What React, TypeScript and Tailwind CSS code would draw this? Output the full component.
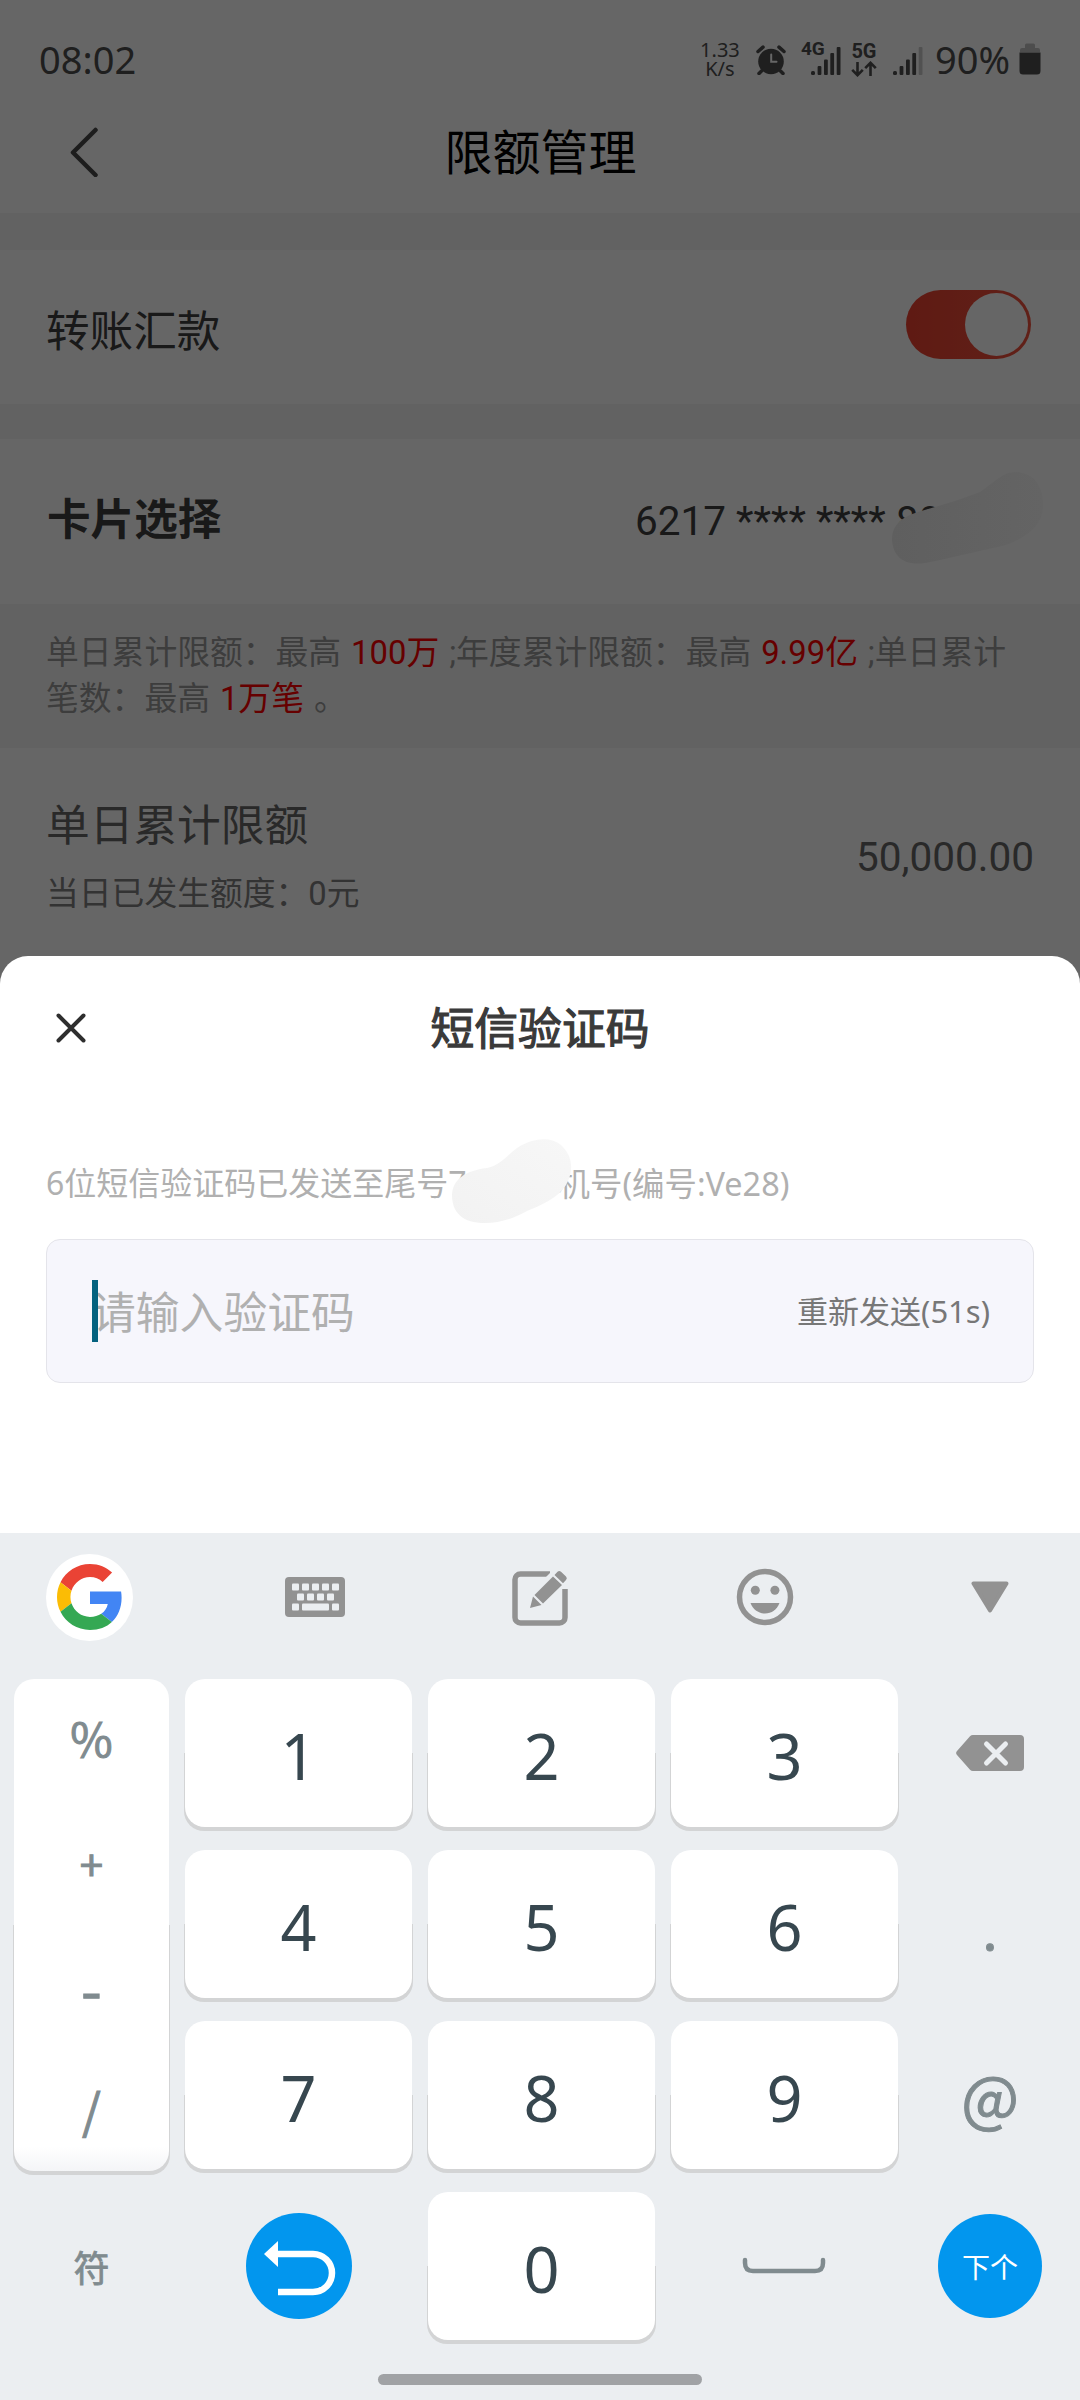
import type { ReactNode } from 'react';
import clsx from 'clsx';

interface KeyProps {
  children: ReactNode;
  className?: string;
}

const digitRows = [
  ['1', '2', '3'],
  ['4', '5', '6'],
  ['7', '8', '9'],
];

const SignalBars = ({ weakLast = false }: { weakLast?: boolean }) => (
  <svg className="h-[29px] w-[30px]" viewBox="0 0 30 29" fill="currentColor">
    <rect x="0" y="24" width="4" height="4" rx="1.5" />
    <rect x="6.6" y="19" width="3.8" height="9" rx="1" />
    <rect x="13" y="12.5" width="3.8" height="15.5" rx="1" />
    <rect x="19.3" y="6" width="3.8" height="22" rx="1" />
    <rect x="25.7" y="0" width="3.8" height="28" rx="1" opacity={weakLast ? 0.3 : 1} />
  </svg>
);

const AlarmIcon = () => (
  <svg className="h-[30px] w-[30px]" viewBox="0 0 30 30" fill="none" stroke="currentColor" strokeLinecap="round">
    <circle cx="15" cy="16.5" r="12.8" fill="currentColor" stroke="none" />
    <path d="M2 6.5 7 2.2M28 6.5 23 2.2M5.5 26 3 28.5M24.5 26l2.5 2.500" strokeWidth="3.5" />
    <path d="M15.2 9.5v7.3h5.3" stroke="#fff" strokeWidth="2" />
  </svg>
);

const DataArrows = () => (
  <svg className="h-[16px] w-[26px]" viewBox="0 0 26 16" fill="none" stroke="currentColor" strokeWidth="2.6">
    <path d="M6.5 1v13M1.2 8.8l5.3 5.4 5.3-5.4M19.5 15V2M14.2 7.2l5.3-5.4 5.3 5.4" />
  </svg>
);

const StatusBar = () => (
  <div className="flex h-[118px] items-center justify-between pl-[39px] pr-[39px] font-['Noto_Sans',sans-serif] text-[38px] leading-none text-[#4e4e4e]">
    <span>08:02</span>
    <div className="flex items-center">
      <div className="flex w-[40px] flex-col items-center text-[20px] leading-[19px]">
        <span>1.33</span>
        <span>K/s</span>
      </div>
      <span className="ml-[16px] pt-[2px]"><AlarmIcon /></span>
      <div className="relative ml-[15px] flex w-[40px] justify-end pt-[5px]">
        <span className="absolute -top-[3px] left-0 font-['Roboto',sans-serif] text-[19px] font-bold leading-[20px]">4G</span>
        <SignalBars />
      </div>
      <div className="ml-[10px] flex flex-col items-center font-['Roboto',sans-serif] text-[20px] font-bold leading-[20px]">
        5G
        <DataArrows />
      </div>
      <span className="ml-[16px] pt-[5px]"><SignalBars weakLast /></span>
      <span className="ml-[12px]">90%</span>
      <svg className="ml-[9px] h-[32px] w-[22px]" viewBox="0 0 22 32" fill="currentColor">
        <path d="M1 9V7a2 2 0 0 1 2-2h3V2a1.500 1.500 0 0 1 1.500-1.500h7A1.500 1.500 0 0 1 16 2v3h3a2 2 0 0 1 2 2v2z" opacity=".35" />
        <path d="M.5 9.500h21V28a3.500 3.500 0 0 1-3.500 3.500H4A3.500 3.500 0 0 1 .5 28z" />
      </svg>
    </div>
  </div>
);

const Key = ({ children, className }: KeyProps) => (
  <button
    className={clsx(
      "relative flex items-center justify-center rounded-[20px] bg-white pt-[5px] font-['Noto_Sans',sans-serif] text-[63px] leading-none text-[#37474f]",
      "before:absolute before:-inset-x-px before:-bottom-[4px] before:top-1/2 before:-z-10 before:rounded-b-[20px] before:bg-[#d3d4d5]",
      className
    )}
  >
    {children}
  </button>
);

const GoogleLogo = () => (
  <svg className="h-[66px] w-[66px]" viewBox="0 0 48 48">
    <path fill="#EA4335" d="M24 9.500c3.540 0 6.710 1.220 9.210 3.600l6.850-6.850C35.900 2.380 30.470 0 24 0 14.620 0 6.510 5.380 2.560 13.220l7.980 6.190C12.430 13.720 17.740 9.500 24 9.500z" />
    <path fill="#4285F4" d="M46.980 24.550c0-1.570-.15-3.090-.38-4.550H24v9.020h12.940c-.58 2.960-2.260 5.480-4.780 7.180l7.730 6c4.510-4.180 7.090-10.360 7.090-17.650z" />
    <path fill="#FBBC05" d="M10.530 28.590c-.48-1.450-.76-2.990-.76-4.590s.27-3.140.76-4.590l-7.980-6.190C.92 16.460 0 20.120 0 24c0 3.880.92 7.540 2.560 10.780l7.970-6.190z" />
    <path fill="#34A853" d="M24 48c6.480 0 11.930-2.130 15.890-5.810l-7.730-6c-2.150 1.450-4.920 2.300-8.160 2.300-6.260 0-11.570-4.220-13.470-9.910l-7.980 6.190C6.510 42.620 14.620 48 24 48z" />
  </svg>
);

const KeyboardIcon = () => (
  <svg className="h-[40px] w-[60px]" viewBox="0 0 60 40">
    <rect width="60" height="40" rx="4" fill="#929292" />
    <g fill="#ebeef1">
      {[7, 17, 27, 37, 47].map((x) => (
        <rect key={x} x={x} y="6.500" width="7" height="7" rx="1" />
      ))}
      {[12, 22, 32, 42].map((x) => (
        <rect key={x} x={x} y="16.500" width="7" height="7" rx="1" />
      ))}
      <rect x="7" y="26.500" width="7" height="7" rx="1" />
      <rect x="17" y="26.500" width="27" height="7" rx="1" />
      <rect x="47" y="26.500" width="7" height="7" rx="1" />
    </g>
  </svg>
);

const EditIcon = () => (
  <svg className="h-[60px] w-[60px]" viewBox="0 0 60 60" fill="#929292">
    <path d="M40 7H10.500A5.500 5.500 0 0 0 5 12.500v38a5.500 5.500 0 0 0 5.500 5.500h39a5.500 5.500 0 0 0 5.500-5.500V22" fill="none" stroke="#929292" strokeWidth="5.500" />
    <path d="M44 2 58 16 32 42 16 44 18 28z" fill="#ebeef1" />
    <path d="M24.500 28 43 9.500l9 8.500L33 36.500zM23 29.500l8.500 8.500L20 41zM44.500 8l3-3.200a2.500 2.500 0 0 1 3.500 0l5 4.700a2.500 2.500 0 0 1 0 3.500l-3 3.300z" />
  </svg>
);

const SmileIcon = () => (
  <svg className="h-[58px] w-[58px]" viewBox="0 0 58 58" fill="#929292">
    <circle cx="29" cy="29" r="25.500" fill="none" stroke="#929292" strokeWidth="5.500" />
    <circle cx="19.300" cy="22.300" r="4.500" />
    <circle cx="38.900" cy="22.300" r="4.500" />
    <path d="M14.500 35h29c-2.500 6.500-8 10.500-14.500 10.500S17 41.500 14.500 35z" />
  </svg>
);

const toolbarItems = [
  <span className="flex h-[87px] w-[87px] items-center justify-center rounded-full bg-white">
    <GoogleLogo />
  </span>,
  <KeyboardIcon />,
  <EditIcon />,
  <SmileIcon />,
  <svg className="h-[34px] w-[40px]" viewBox="1 0 40 34">
    <path d="M3.500 3.500h33L20 30.500z" fill="#929292" stroke="#929292" strokeWidth="4" strokeLinejoin="round" />
  </svg>,
];

const LimitPage = () => (
  <div className="relative h-[956px] bg-white">
    <StatusBar />
    <header className="flex h-[95px] items-center px-[70px]">
      <svg className="-mt-[27px] h-[50px] w-[30px]" viewBox="0 0 30 50" fill="none" stroke="#4a4a4a" strokeWidth="4.500" strokeLinecap="round" strokeLinejoin="round">
        <path d="M25.500 3 3 25.500 25.500 48" />
      </svg>
      <h1 className="flex-1 pb-[23px] pr-[29px] text-center text-[48px] leading-none text-black">限额管理</h1>
    </header>

    <div className="h-[37px] bg-[#f5f5f5]" />
    <div className="flex h-[154px] items-center justify-between pl-[46px] pr-[49px] text-[43.6px] text-[#404040]">
      <span className="pt-[11px]">转账汇款</span>
      <div className="mb-[5px] flex h-[69px] w-[125px] items-center justify-end rounded-full bg-linear-to-r from-[#ed4230] to-[#f0523e] pr-[3px]">
        <span className="h-[63px] w-[63px] rounded-full bg-white" />
      </div>
    </div>

    <div className="h-[35px] bg-[#f5f5f5]" />
    <div className="flex h-[165px] items-center justify-between pl-[47px] text-[43.600px] text-[#404040]">
      <span className="pb-[2px] font-bold">卡片选择</span>
      <span className="w-[445px] text-[40.500px]">6217 **** **** 80</span>
    </div>

    <p className="h-[144px] bg-[#f5f5f5] pl-[46px] pr-[60px] pt-[26px] text-[32.800px] leading-[46px] [word-spacing:1.8px] text-[#999]">
      单日累计限额：最高 <span className="text-[#f00]">100万</span> ;年度累计限额：最高{' '}
      <span className="text-[#f00]">9.99亿</span> ;单日累计笔数：最高 <span className="text-[#f00]">1万笔</span> 。
    </p>

    <div className="flex h-[208px] items-center justify-between pl-[46px] pr-[46px]">
      <div className="flex flex-col pt-[12px]">
        <span className="text-[43.700px] leading-[72px] text-[#666]">单日累计限额</span>
        <span className="text-[32.800px] leading-[64px] text-[#808080]">当日已发生额度：0元</span>
      </div>
      <span className="pt-[11px] text-[40.500px] leading-none text-[#666]">50,000.00</span>
    </div>

    <div className="absolute inset-0 bg-black/60" />
    {/* smudge over the last card digits */}
    <svg className="absolute left-[890px] top-[470px] h-[96px] w-[156px]" viewBox="0 0 156 96">
      <defs>
        <linearGradient id="smudge">
          <stop offset="0" stopColor="#5f5f5f" />
          <stop offset="1" stopColor="#646464" />
        </linearGradient>
      </defs>
      <path
        d="M2 68C3 54 12 47 28 42C48 36 70 30 90 22C104 13 112 2 126 2C144 3 153 16 153 34C154 54 138 68 112 76C84 82 60 88 40 92C14 98 2 86 2 68Z"
        fill="url(#smudge)"
      />
    </svg>
  </div>
);

const CodeSheet = () => (
  <section className="h-[577px] rounded-t-[28px] bg-white px-[46px]">
    <div className="flex h-[144px] items-center">
      <svg className="ml-[9px] h-[32px] w-[32px]" viewBox="0 0 32 32" stroke="#2e2e2e" strokeWidth="4" strokeLinecap="round">
        <path d="M3.500 3.500l25 25M28.500 3.500l-25 25" />
      </svg>
      <h2 className="flex-1 pr-[41px] pt-[6px] text-center text-[43.800px] leading-none text-[#3a3a3a] [-webkit-text-stroke:1.2px_#3a3a3a]">短信验证码</h2>
    </div>

    <div className="relative flex h-[139px] items-end pb-[32px] font-['Noto_Sans','Noto_Sans_CJK_SC',sans-serif] leading-[48px] text-[#b0b0b0]">
      <span className="text-[32px]">6位短信验证码已发送至尾号7</span>
      <span className="ml-[91px] text-[32.400px]">机号(编号:Ve28)</span>
      <svg className="absolute left-[405px] top-[37px] h-[88px] w-[122px]" viewBox="0 0 122 88">
        <defs>
          <linearGradient id="phoneSmudge" x1="0" y1="1" x2="1" y2="0">
            <stop offset="0" stopColor="#f2f2f2" />
            <stop offset="1" stopColor="#f7f7f7" />
          </linearGradient>
        </defs>
        <path
          d="M1 58C2 42 14 34 36 31C50 28 56 18 66 11C84 0 100 0 110 8C122 19 123 34 115 48C106 62 90 68 76 74C62 82 48 86 34 86C12 86 1 76 1 58Z"
          fill="url(#phoneSmudge)"
        />
      </svg>
    </div>

    <div className="flex h-[144px] items-center justify-between rounded-[14px] border border-[#e4e4ea] bg-[#f6f6fc] pl-[45px] pr-[43px]">
      <div className="relative pt-[5px] text-[43.800px] leading-[62px] text-[#b0b0b0]">
        请输入验证码
        <span className="absolute left-0 top-[2px] h-[62px] w-[6px] bg-[#04627f]" />
      </div>
      <span className="font-['Noto_Sans','Noto_Sans_CJK_SC',sans-serif] text-[31px] text-[#777]">重新发送(51s)</span>
    </div>
  </section>
);

const Keyboard = () => (
  <section className="isolate h-[867px] bg-[#ebeef1]">
    <div className="flex h-[128px] items-center justify-between px-[46px]">
      {toolbarItems.map((item, i) => (
        <button key={i} className="flex w-[87px] items-center justify-center">
          {item}
        </button>
      ))}
    </div>

    <div className="mt-[18px] grid grid-cols-[155px_227px_227px_227px_152px] grid-rows-[148px_148px_148px_148px] gap-x-[16px] gap-y-[23px] px-[14px] font-['Noto_Sans_CJK_SC',sans-serif] text-[48px] leading-none text-[#808b8f]">
      <div className="relative row-span-3 -mb-[2px] flex flex-col items-center rounded-[20px] bg-linear-to-b from-white from-95% to-[#f4f5f7] [-webkit-text-stroke:1px_#808b8f] before:absolute before:-inset-x-px before:-bottom-[4px] before:top-1/2 before:-z-10 before:rounded-b-[20px] before:bg-[#d3d4d5]">
        <span className="flex h-[116px] items-center text-[46px]">%</span>
        <span className="flex h-[138px] items-center text-[42px]">+</span>
        <span className="flex h-[114px] items-center text-[60px]">-</span>
        <span className="flex h-[128px] items-center">/</span>
      </div>
      {digitRows[0].map((d) => <Key key={d}>{d}</Key>)}
      <div className="flex items-center justify-center">
        <svg className="h-[38px] w-[70px]" viewBox="0 0 70 38">
          <path d="M18 1h47a4 4 0 0 1 4 4v28a4 4 0 0 1-4 4H18a4 4 0 0 1-3-1.300L2 21a3 3 0 0 1 0-4L15 2.300A4 4 0 0 1 18 1z" fill="#929292" />
          <path d="M31.500 10l19 19M50.500 10l-19 19" stroke="#ebeef1" strokeWidth="5" strokeLinecap="round" />
        </svg>
      </div>
      {digitRows[1].map((d) => <Key key={d}>{d}</Key>)}
      <div className="flex items-center justify-center pt-[8px] text-[52px] [-webkit-text-stroke:1px_#808b8f]">.</div>
      {digitRows[2].map((d) => <Key key={d}>{d}</Key>)}
      <div className="flex items-center justify-center pb-px text-[61px] [-webkit-text-stroke:1px_#808b8f]">@</div>

      <div className="flex items-center justify-center text-[36px] [-webkit-text-stroke:0.8px_#808b8f]">符</div>
      <div className="flex items-center justify-center">
        <span className="flex h-[106px] w-[106px] items-center justify-center rounded-full bg-[#0296ee]">
          <svg className="h-[106px] w-[106px]" viewBox="0 0 106 106">
            <path d="M28 41h39a19 19 0 0 1 0 38H32" fill="none" stroke="#fff" strokeWidth="6.500" />
            <path d="M18 41 32 28v26z" fill="#fff" />
          </svg>
        </span>
      </div>
      <Key>0</Key>
      <div className="flex items-center justify-center">
        <svg className="-ml-[2px] h-[18px] w-[84px]" viewBox="0 0 84 18" fill="none" stroke="#808b8f" strokeWidth="4.500" strokeLinecap="round">
          <path d="M3 3v3q0 8 8 8h62q8 0 8-8V3" />
        </svg>
      </div>
      <div className="flex items-center justify-center">
        <span className="flex h-[104px] w-[104px] items-center justify-center rounded-full bg-[#0296ee] text-[28px] text-white">
          下个
        </span>
      </div>
    </div>

    <div className="mx-auto mt-[34px] h-[11px] w-[324px] rounded-full bg-[#a0a2a5]" />
  </section>
);

export default function App() {
  return (
    <div className="h-[2400px] w-[1080px] overflow-hidden bg-[#666] font-['Roboto','Noto_Sans_CJK_SC',sans-serif]">
      <LimitPage />
      <CodeSheet />
      <Keyboard />
    </div>
  );
}
